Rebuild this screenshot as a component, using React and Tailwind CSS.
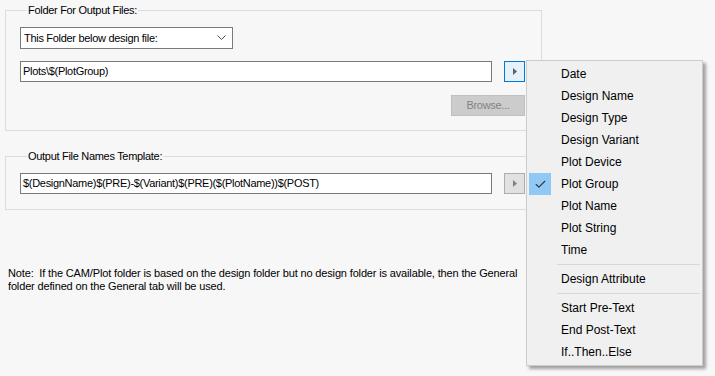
import { Check } from "lucide-react";

const menuItems = [
  "Date",
  "Design Name",
  "Design Type",
  "Design Variant",
  "Plot Device",
  "Plot Group",
  "Plot Name",
  "Plot String",
  "Time",
  "-",
  "Design Attribute",
  "-",
  "Start Pre-Text",
  "End Post-Text",
  "If..Then..Else",
];

function ArrowButton({ active }) {
  return (
    <button
      className={`ml-[12px] w-[21px] h-[21px] flex items-center justify-center border ${
        active ? "border-[#0078d7] bg-[#e5f1fb]" : "border-[#adadad] bg-[#e1e1e1]"
      }`}
    >
      <svg width="4" height="7" viewBox="0 0 4 7">
        <path d="M0 0 L4 3.5 L0 7 Z" fill={active ? "#606060" : "#838383"} />
      </svg>
    </button>
  );
}

function GroupBox({ label, height, children }) {
  return (
    <fieldset
      className="ml-[5px] w-[537px] border border-[#dcdcdc] pl-[14px] pt-[10px]"
      style={{ height }}
    >
      <legend className="ml-[7px] px-[1px] leading-[13px]">{label}</legend>
      {children}
    </fieldset>
  );
}

export default function App() {
  return (
    <div
      className="relative w-[715px] h-[376px] overflow-hidden bg-[#f7f7f7] text-[11px] tracking-[-0.3px] text-black"
      style={{ fontFamily: '"Liberation Sans", Arial, sans-serif' }}
    >
      <div className="pt-[4px]">
        <GroupBox label="Folder For Output Files:" height={127}>
          <div className="w-[213px] h-[22px] border border-[#7a7a7a] bg-white flex items-center justify-between pl-[3px] pr-[6px]">
            <span>This Folder below design file:</span>
            <svg width="9" height="6" viewBox="0 0 9 6">
              <path d="M0.5 0.5 L4.5 4.5 L8.5 0.5" fill="none" stroke="#505050" strokeWidth="1" />
            </svg>
          </div>
          <div className="mt-[12px] flex items-center">
            <div className="w-[472px] h-[21px] border border-[#7a7a7a] bg-white flex items-center pl-[2px]">
              Plots\$(PlotGroup)
            </div>
            <ArrowButton active />
          </div>
          <div className="mt-[13px] flex justify-end w-[505px]">
            <button className="w-[74px] h-[21px] border border-[#bfbfbf] bg-[#cccccc] text-[#838383]">
              Browse...
            </button>
          </div>
        </GroupBox>

        <div className="h-[19px]" />

        <GroupBox label="Output File Names Template:" height={60}>
          <div className="flex items-center">
            <div className="w-[472px] h-[21px] border border-[#7a7a7a] bg-white flex items-center pl-[2px]">
              $(DesignName)$(PRE)-$(Variant)$(PRE)($(PlotName))$(POST)
            </div>
            <ArrowButton />
          </div>
        </GroupBox>

        <p className="mt-[57px] ml-[8px] leading-[13px] tracking-[-0.15px]">
          Note:&nbsp; If the CAM/Plot folder is based on the design folder but no design folder is available, then the General
          <br />
          folder defined on the General tab will be used.
        </p>
      </div>

      <div className="absolute left-[526px] top-[60px] w-[177px] border border-[#cccccc] bg-[#f0f0f0] py-[2px] text-[12px] tracking-normal shadow-[3px_3px_3px_rgba(0,0,0,0.35)]">
        {menuItems.map((item, i) =>
          item === "-" ? (
            <div key={i} className="h-[7px] pt-[3px] pl-[30px] pr-[2px]">
              <div className="h-px bg-[#d7d7d7]" />
            </div>
          ) : (
            <div key={i} className="h-[22px] flex items-center">
              <div
                className={`ml-[2px] w-[22px] h-[22px] flex items-center justify-center ${
                  item === "Plot Group" ? "bg-[#90c8f6]" : ""
                }`}
              >
                {item === "Plot Group" && <Check size={13} strokeWidth={2} color="#333" />}
              </div>
              <span className="ml-[10px]">{item}</span>
            </div>
          )
        )}
      </div>
    </div>
  );
}
